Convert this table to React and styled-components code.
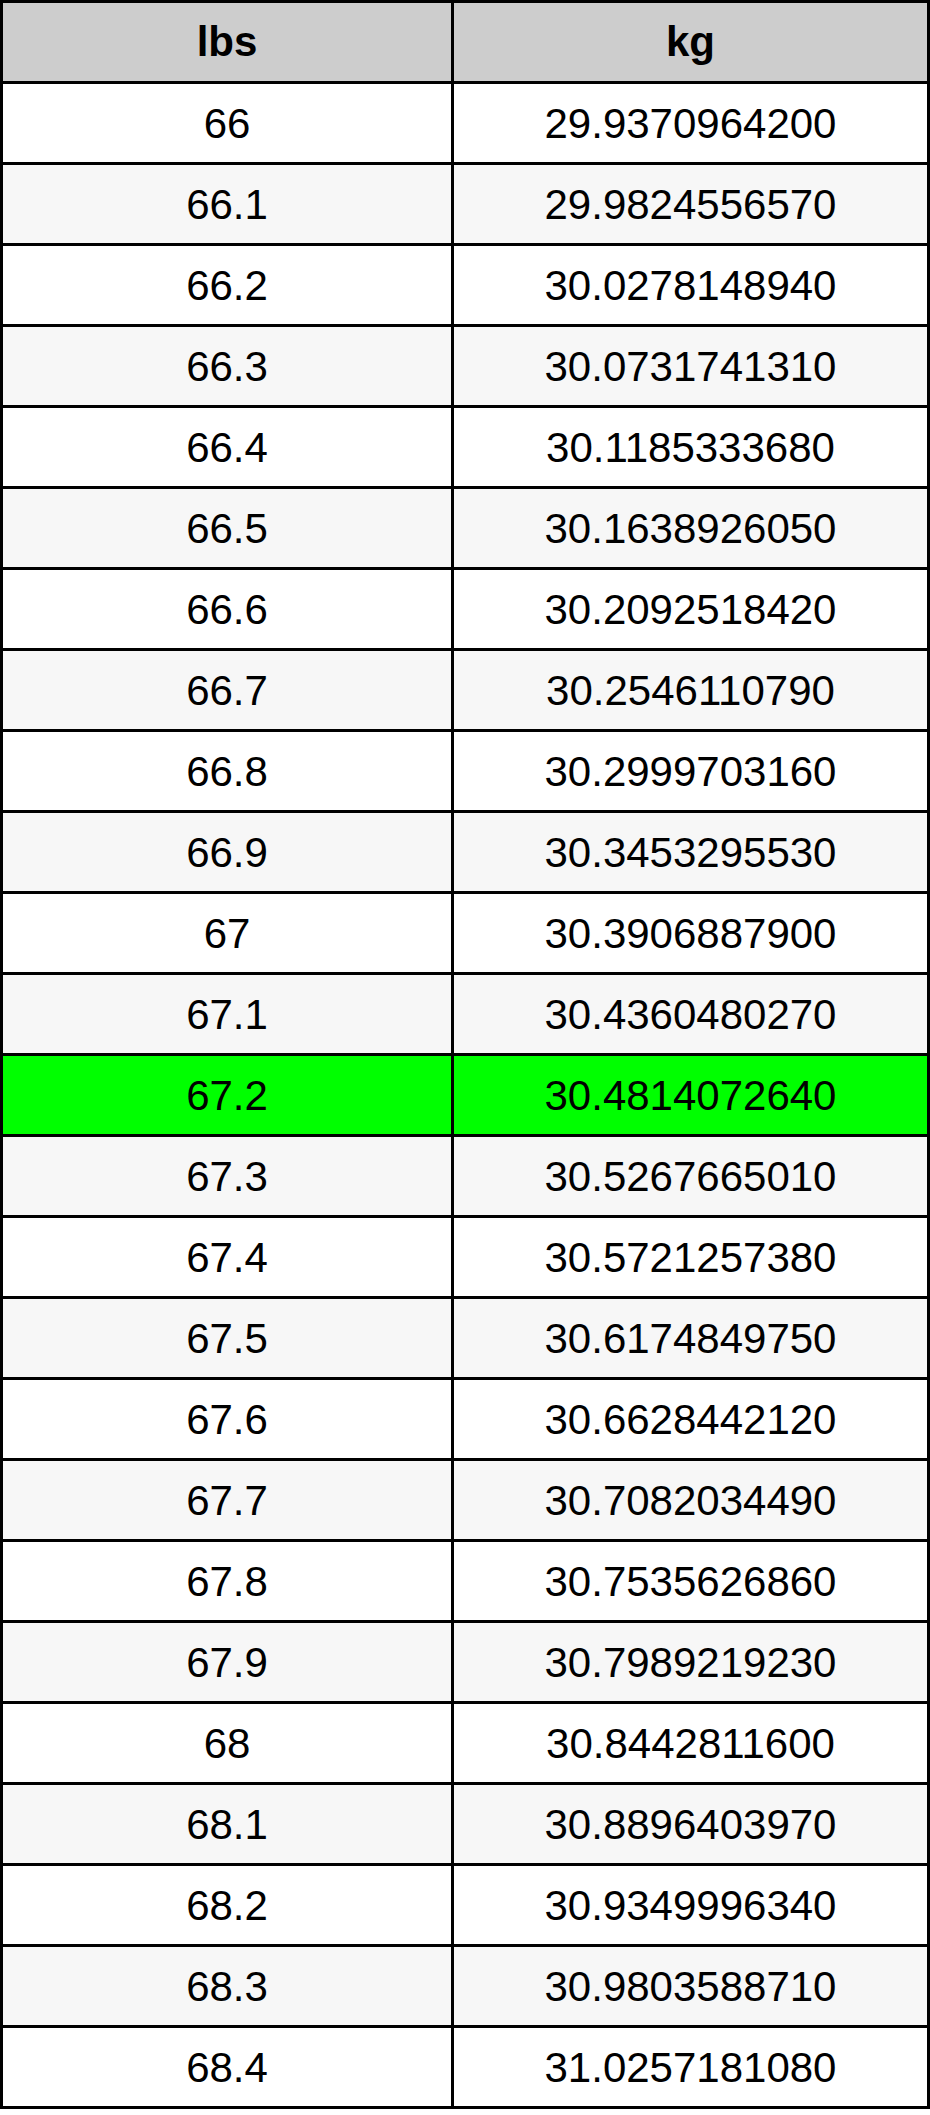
import React from "react";
import styled, {createGlobalStyle} from "styled-components";

const GlobalStyle = createGlobalStyle`
    html, body {
        margin: 0;
        padding: 0;
        background: #ffffff;
    }
    body {
        font-family: "Liberation Sans", Arial, sans-serif;
    }
`

const Table = styled.div`
    display: grid;
    grid-template-columns: 448px 473px;
    grid-auto-rows: 78px;
    gap: 3px;
    padding: 3px;
    width: 930px;
    box-sizing: border-box;
    background-color: #000000;
`

const Cell = styled.div`
    display: flex;
    align-items: center;
    justify-content: center;
    background-color: ${props => props.bg};
    color: #000000;
    font-size: 42px;
    font-weight: ${props => props.head ? "bold" : "normal"};
    padding-top: ${props => props.head ? "0" : "1px"};
`

const rows = [
    ["66", "29.9370964200"],
    ["66.1", "29.9824556570"],
    ["66.2", "30.0278148940"],
    ["66.3", "30.0731741310"],
    ["66.4", "30.1185333680"],
    ["66.5", "30.1638926050"],
    ["66.6", "30.2092518420"],
    ["66.7", "30.2546110790"],
    ["66.8", "30.2999703160"],
    ["66.9", "30.3453295530"],
    ["67", "30.3906887900"],
    ["67.1", "30.4360480270"],
    ["67.2", "30.4814072640"],
    ["67.3", "30.5267665010"],
    ["67.4", "30.5721257380"],
    ["67.5", "30.6174849750"],
    ["67.6", "30.6628442120"],
    ["67.7", "30.7082034490"],
    ["67.8", "30.7535626860"],
    ["67.9", "30.7989219230"],
    ["68", "30.8442811600"],
    ["68.1", "30.8896403970"],
    ["68.2", "30.9349996340"],
    ["68.3", "30.9803588710"],
    ["68.4", "31.0257181080"],
]

const highlighted = "67.2"

function rowColor(lbs, i) {
    if (lbs === highlighted) return "#00ff00";
    return i % 2 === 0 ? "#ffffff" : "#f7f7f7";
}

export default function App() {
    return (
        <>
            <GlobalStyle />
            <Table>
                <Cell head bg="#cdcdcd">lbs</Cell>
                <Cell head bg="#cdcdcd">kg</Cell>
                {
                    rows.map(([lbs, kg], i) => (
                        <React.Fragment key={lbs}>
                            <Cell bg={rowColor(lbs, i)}>{lbs}</Cell>
                            <Cell bg={rowColor(lbs, i)}>{kg}</Cell>
                        </React.Fragment>
                    ))
                }
            </Table>
        </>
    )
}
